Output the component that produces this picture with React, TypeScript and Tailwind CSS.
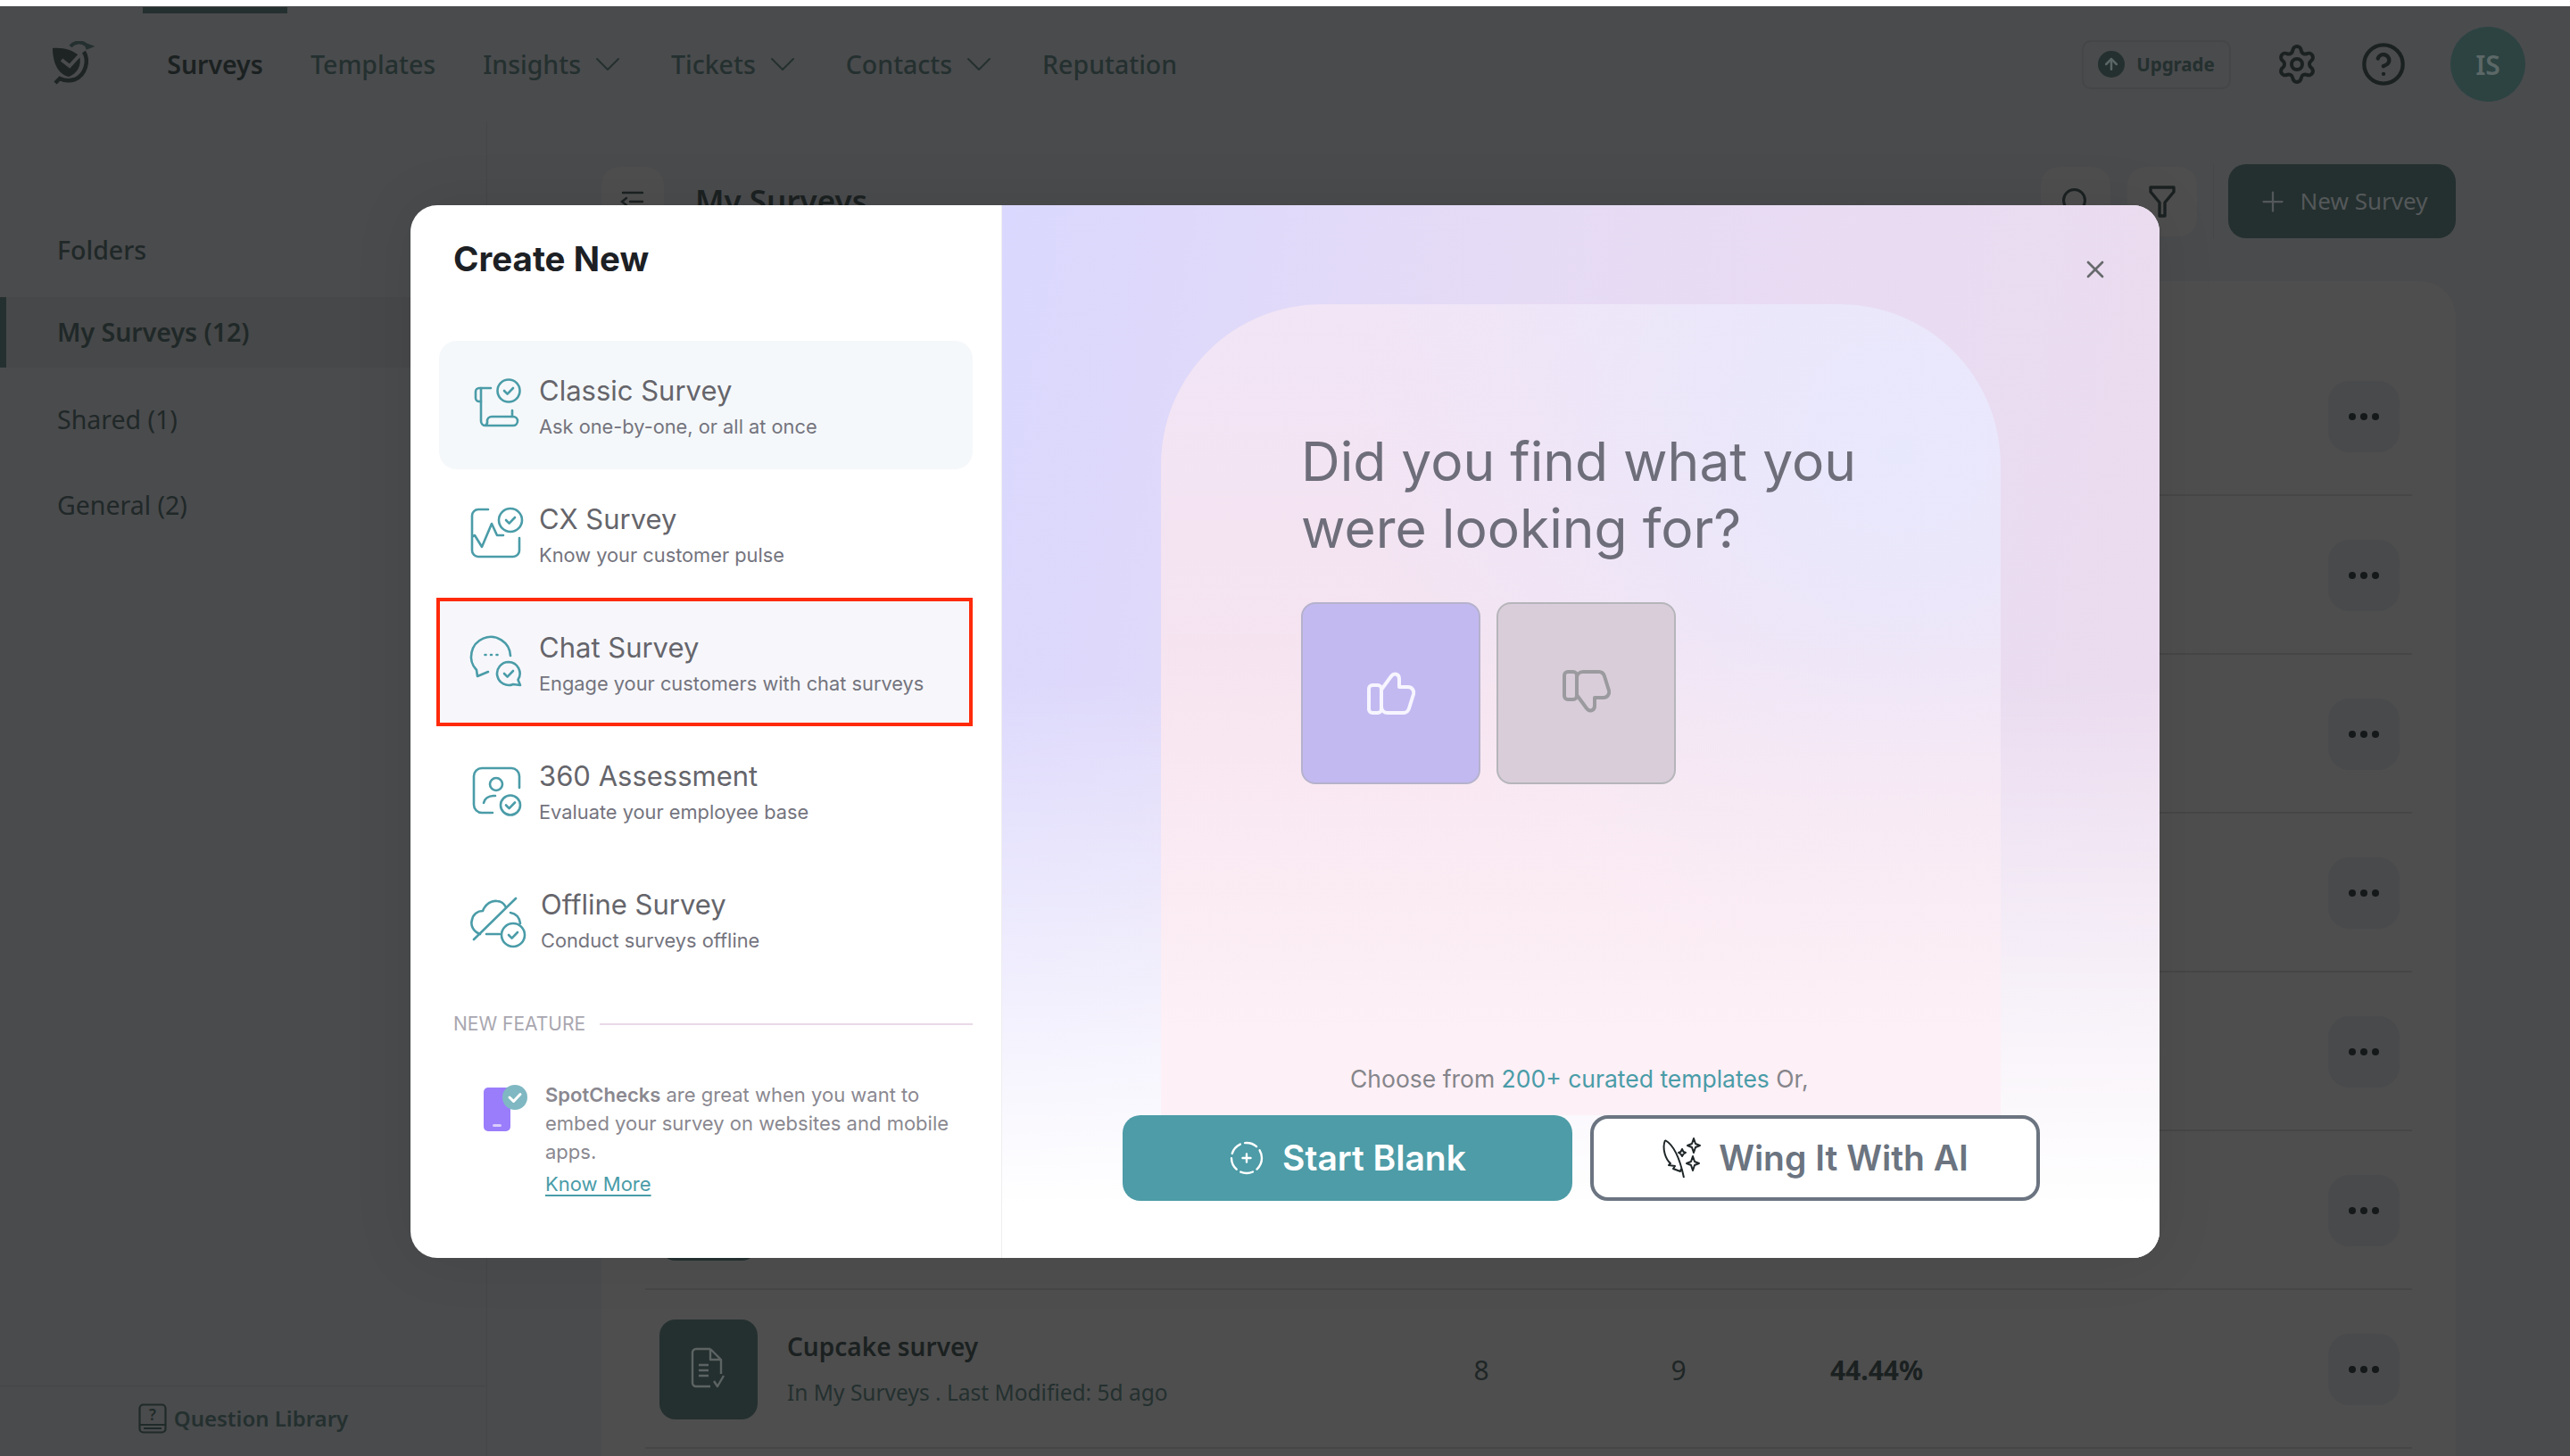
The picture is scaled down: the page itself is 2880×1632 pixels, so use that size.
import { ArrowUp, ChevronDown, CircleHelp, Plus, Search, Settings, X } from "lucide-react";

const TEAL = "#4a9ca8";

function CheckCircle({ cx, cy, r }: { cx: number; cy: number; r: number }) {
  return (
    <>
      <circle cx={cx} cy={cy} r={r} />
      <path d={`M${cx - 5} ${cy} l3.6 3.6 l6.4 -6.6`} />
    </>
  );
}

function IconFrame({ children }: { children: React.ReactNode }) {
  return (
    <svg
      viewBox="0 0 80 80"
      fill="none"
      stroke={TEAL}
      strokeWidth="2.6"
      strokeLinecap="round"
      strokeLinejoin="round"
      className="h-[80px] w-[80px] shrink-0"
    >
      {children}
    </svg>
  );
}

function ClassicIcon() {
  return (
    <IconFrame>
      <CheckCircle cx={50} cy={24} r={12.5} />
      <path d="M30 21 H17 a4 4 0 0 0 -4 4 v7 a4 4 0 0 0 4 4 h2" />
      <path d="M19 21 V58 a5 5 0 0 0 5 5 H55 a5 5 0 0 0 5 -5 a5 5 0 0 0 -5 -5 H31 a5 5 0 0 0 -5 5 a5 5 0 0 1 -2 5" />
      <path d="M54 53 V46" />
    </IconFrame>
  );
}

function CxIcon() {
  return (
    <IconFrame>
      <path d="M27 13 H16 a7 7 0 0 0 -7 7 V59 a7 7 0 0 0 7 7 H55 a7 7 0 0 0 7 -7 V45" />
      <path d="M10 43 L12 42 L20 55 L31 29 L37 42 H44" />
      <CheckCircle cx={52} cy={25} r={13} />
    </IconFrame>
  );
}

function ChatIcon() {
  return (
    <IconFrame>
      <path d="M52 33 A22 22 0 1 0 14 49 L15 56 L27 51" />
      <path d="M23.500 32 h1 M30 32 h1 M36.500 32 h1" />
      <path d="M50 40 A13 13 0 1 0 55 65 L63 66 L60.500 60 A13 13 0 0 0 50 40 Z" />
      <path d="M45 53 l3.600 3.600 l6.400 -6.600" />
    </IconFrame>
  );
}

function AssessmentIcon() {
  return (
    <IconFrame>
      <path d="M62 37 V24 a9 9 0 0 0 -9 -9 H20 a9 9 0 0 0 -9 9 V56 a9 9 0 0 0 9 9 H32" />
      <circle cx={36} cy={33} r={7} />
      <path d="M22 54 a11 9 0 0 1 11 -8 H35" />
      <CheckCircle cx={52} cy={56.500} r={11} />
    </IconFrame>
  );
}

function OfflineIcon() {
  return (
    <IconFrame>
      <path d="M11 63 L58 17" />
      <path d="M18 57 C10 54 7 47 9 41 C10 35 15 31 21 31 C24 23 31 19 37 20 C42 20 45 23 47 27" />
      <path d="M25 57 H40" />
      <path d="M52 33 C58 34 62 38 63 45" />
      <CheckCircle cx={55} cy={58} r={13} />
    </IconFrame>
  );
}

function Logo() {
  return (
    <svg viewBox="0 0 50 52" className="h-[52px] w-[50px]" fill="none">
      <path d="M0 8 C11 7 23 10 30 17 C33 27 27 37 18 40 C8 38 0 27 0 8 Z" fill="#1d2423" />
      <path d="M10 21 L19 28 L31 15" stroke="#4a4b4d" strokeWidth="4" />
      <path d="M20 6 C24 1 32 0 37 4 L42 6 L37 8" stroke="#24302f" strokeWidth="4" />
      <path d="M35 12 C41 22 37 38 25 43 C19 45 12 44 8 42 L3 47" stroke="#1d2423" strokeWidth="4.500" />
    </svg>
  );
}

function ThumbIcon({ color, flip }: { color: string; flip?: boolean }) {
  return (
    <svg
      viewBox="0 0 54 48"
      fill="none"
      stroke={color}
      strokeWidth="4"
      strokeLinejoin="round"
      className={flip ? "h-[48px] w-[54px] -scale-y-100" : "h-[48px] w-[54px]"}
    >
      <rect x="2" y="15" width="14" height="31" rx="4" />
      <path d="M16 20 L27 5 C30 1 36 2 36 8 V17 H46 C50 17 53 21 52 25 L47 41 C46 44 44 46 41 46 H23 C19 46 16 43 16 39" />
    </svg>
  );
}

function StartIcon() {
  return (
    <svg viewBox="0 0 40 40" fill="none" stroke="white" strokeWidth="2.400" strokeLinecap="round" className="h-[40px] w-[40px]">
      <circle cx="20" cy="20" r="17" strokeDasharray="14 5.400" />
      <path d="M20 15.500 V24.500 M15.500 20 H24.500" />
    </svg>
  );
}

function WingIcon() {
  return (
    <svg viewBox="0 0 44 48" fill="none" stroke="#1f2628" strokeWidth="2" strokeLinejoin="round" className="h-[48px] w-[44px]">
      <path d="M4 4 C13 9 20 22 25 46 M4 4 C0 14 5 26 10 30 L8 32 L15 33 L13 36 L21 39 L22 36" />
      <path d="M36 2 L38 8 L43 10 L38 12 L36 18 L34 12 L29 10 L34 8 Z" />
      <path d="M23 14 L24.500 17 L27 18 L24.500 19.500 L23 22 L21.500 19.500 L19 18 L21.500 17 Z" />
      <path d="M35 22 L37 28 L42 30 L37 32 L35 38 L33 32 L28 30 L33 28 Z" />
    </svg>
  );
}

function PhoneIcon() {
  return (
    <svg viewBox="0 0 52 52" className="h-[52px] w-[52px]" fill="none">
      <rect x="0" y="3" width="30" height="49" rx="5" fill="#9a7dfb" />
      <rect x="10" y="44" width="10" height="3" rx="1.500" fill="#d9ccfb" />
      <circle cx="35" cy="14" r="14" fill="#7fb8c2" />
      <path d="M29 14 L33.500 18.500 L41 10.500" stroke="white" strokeWidth="3" strokeLinecap="round" strokeLinejoin="round" />
    </svg>
  );
}

function QuestionBookIcon() {
  return (
    <svg viewBox="0 0 32 34" fill="none" stroke="#1f2a29" strokeWidth="2.200" className="h-[34px] w-[32px]">
      <rect x="1.500" y="1.500" width="29" height="31" rx="4" />
      <path d="M1.500 24 H30.500 M6 28 H26" />
      <text x="16" y="19" fontSize="17" textAnchor="middle" fill="#1f2a29" stroke="none" fontFamily="Noto Sans">?</text>
    </svg>
  );
}

function DocIcon() {
  return (
    <svg viewBox="0 0 40 50" fill="none" stroke="#5d6363" strokeWidth="2.400" strokeLinejoin="round" className="h-[50px] w-[40px]">
      <path d="M22 2 H6 a4 4 0 0 0 -4 4 V40 a4 4 0 0 0 4 4 H22 M22 2 L34 14 V30 M22 2 V14 H34" />
      <path d="M9 20 H20 M9 26 H20 M9 32 H20 M26 38 L30 44 L37 32" />
    </svg>
  );
}

const navItems = [
  { label: "Templates" },
  { label: "Insights", menu: true },
  { label: "Tickets", menu: true },
  { label: "Contacts", menu: true },
  { label: "Reputation" },
];

const surveyTypes = [
  { title: "Classic Survey", sub: "Ask one-by-one, or all at once", icon: <ClassicIcon />, box: "pl-[28px] bg-[#f5f8fa] rounded-[20px]", gap: "ml-[4px]" },
  { title: "CX Survey", sub: "Know your customer pulse", icon: <CxIcon />, box: "pl-[28px]", gap: "ml-[4px]" },
  { title: "Chat Survey", sub: "Engage your customers with chat surveys", icon: <ChatIcon />, box: "-ml-[3px] pl-[27px] bg-[#f7f7fb] border-[4px] border-[#ff2a0a]", gap: "ml-[4px]" },
  { title: "360 Assessment", sub: "Evaluate your employee base", icon: <AssessmentIcon />, box: "pl-[28px]", gap: "ml-[4px]" },
  { title: "Offline Survey", sub: "Conduct surveys offline", icon: <OfflineIcon />, box: "pl-[28px]", gap: "ml-[6px]" },
];

const rows = [null, null, null, null, null, null, { name: "Cupcake survey", meta: "In My Surveys . Last Modified: 5d ago", a: "8", b: "9", rate: "44.44%" }];

export default function App() {
  return (
    <div className="h-[1632px] w-[2880px] overflow-hidden bg-white pt-[7px] font-['Noto_Sans',sans-serif]">
      <div className="relative flex h-[1625px] flex-col bg-[#4a4b4d]">
        <header className="flex h-[130px] shrink-0 items-center pl-[59px] pr-[50px]">
          <Logo />
          <nav className="ml-[78px] flex items-center gap-[53px] text-[28.5px] font-medium text-[#24302f]">
            <a className="relative flex h-[130px] w-[108px] items-center justify-center whitespace-nowrap font-semibold text-[#1b2121]">
              <span className="absolute left-[-27px] top-[1px] h-[7px] w-[162px] bg-[#24302f]" />
              Surveys
            </a>
            {navItems.map((item) => (
              <a key={item.label} className="flex items-center gap-[6px] whitespace-nowrap">
                {item.label}
                {item.menu && <ChevronDown size={48} strokeWidth={1} className="-mr-[6px]" />}
              </a>
            ))}
          </nav>
          <div className="ml-auto flex items-center">
            <button className="flex h-[55px] w-[167px] items-center justify-center gap-[13px] rounded-[10px] border-[2px] border-[#454648] text-[20.5px] font-bold text-[#24302f]">
              <span className="flex h-[30px] w-[30px] items-center justify-center rounded-full bg-[#24302f]">
                <ArrowUp size={20} strokeWidth={3} className="text-[#5a6665]" />
              </span>
              Upgrade
            </button>
            <Settings size={48} strokeWidth={2} className="ml-[50px] text-[#1b2121]" />
            <CircleHelp size={52} strokeWidth={2} className="ml-[47px] text-[#1b2121]" />
            <div className="ml-[49px] flex h-[84px] w-[84px] items-center justify-center rounded-full bg-[#2c4342] text-[30px] font-semibold text-[#5c6867]">IS</div>
          </div>
        </header>

        <div className="flex min-h-0 flex-1">
          <aside className="flex w-[546px] shrink-0 flex-col border-r-[1px] border-[#444547] text-[28.5px] text-[#202828]">
            <div className="ml-[64px] mt-[123px] h-[40px] font-medium leading-[40px]">Folders</div>
            <div className="mt-[33px] flex h-[79px] items-center border-l-[7px] border-[#24302f] bg-[#474849] pl-[57px] font-semibold">My Surveys (12)</div>
            <div className="ml-[64px] mt-[38px] h-[40px] leading-[40px]">Shared (1)</div>
            <div className="ml-[64px] mt-[56px] h-[40px] leading-[40px]">General (2)</div>
            <div className="mt-auto flex h-[79px] items-center justify-center gap-[8px] border-t-[1px] border-[#444547] pb-[6px] text-[24px] font-semibold text-[#24302f]">
              <QuestionBookIcon />
              Question Library
            </div>
          </aside>

          <main className="flex min-w-0 flex-1 flex-col pl-[128px] pr-[128px] pt-[47px]">
            <div className="flex h-[83px] shrink-0 items-center">
              <div className="flex h-[78px] w-[70px] items-center justify-center rounded-[20px] bg-[#4e4e4e]">
                <svg viewBox="0 0 28 26" fill="none" stroke="#1b2121" strokeWidth="2.400" strokeLinecap="round" className="h-[26px] w-[28px]">
                  <path d="M3 3 H25 M11 13 H25 M3 23 H25 M7 9 L2 13 L7 17" />
                </svg>
              </div>
              <h1 className="ml-[35px] text-[35px] font-semibold text-[#1b2121]">My Surveys</h1>
              <div className="ml-auto flex items-center">
                <div className="flex h-[78px] w-[78px] items-center justify-center rounded-[20px] bg-[#4e4e4e]">
                  <Search size={36} strokeWidth={2} className="text-[#1b2121]" />
                </div>
                <div className="ml-[19px] flex h-[78px] w-[78px] items-center justify-center rounded-[20px] bg-[#4e4e4e]">
                  <svg viewBox="0 0 30 36" fill="none" stroke="#1b2121" strokeWidth="3.400" strokeLinejoin="round" className="h-[36px] w-[30px]">
                    <path d="M2 2 H28 V7 L18 19 V34 H12 V19 L2 7 Z" />
                  </svg>
                </div>
                <span className="ml-[18px] h-[83px] w-[1px] bg-[#454648]" />
                <button className="ml-[16px] flex h-[83px] w-[255px] items-center justify-center gap-[13px] rounded-[20px] bg-[#24302f] text-[26px] text-[#54585a]">
                  <Plus size={36} strokeWidth={1.500} />
                  New Survey
                </button>
              </div>
            </div>

            <section className="mt-[48px] min-h-0 flex-1 overflow-hidden rounded-t-[40px] bg-[#4e4e4e] px-[49px] pt-[63px]">
              {rows.map((row, i) => (
                <div key={i} className="flex h-[178px] items-center border-b-[2px] border-[#464646] pl-[16px] pr-[14px] pt-[2px]">
                  <div className="flex h-[112px] w-[110px] shrink-0 items-center justify-center rounded-[18px] bg-[#24302f]">
                    <DocIcon />
                  </div>
                  {row && (
                    <>
                      <div className="ml-[33px] w-[748px] shrink-0">
                        <div className="-mt-[3px] text-[28px] font-semibold leading-[40px] text-[#1b2121]">{row.name}</div>
                        <div className="mt-[14px] text-[24.5px] leading-[36px] text-[#24302f]">{row.meta}</div>
                      </div>
                      <div className="w-[60px] text-center text-[30px] text-[#1f2626]">{row.a}</div>
                      <div className="ml-[161px] w-[60px] text-center text-[30px] text-[#1f2626]">{row.b}</div>
                      <div className="ml-[132px] w-[120px] text-center text-[30px] font-bold text-[#1b2121]">{row.rate}</div>
                    </>
                  )}
                  <div className="ml-auto flex h-[80px] w-[80px] items-center justify-center gap-[5px] rounded-[24px] bg-[#494a4c]">
                    <span className="h-[8px] w-[8px] rounded-full bg-[#15191a]" />
                    <span className="h-[8px] w-[8px] rounded-full bg-[#15191a]" />
                    <span className="h-[8px] w-[8px] rounded-full bg-[#15191a]" />
                  </div>
                </div>
              ))}
            </section>
          </main>
        </div>

        {/* modal, lies over the dimmed page */}
        <div className="absolute left-[460px] top-[223px] flex h-[1180px] w-[1960px] overflow-hidden rounded-[30px] bg-white font-['Inter',sans-serif] shadow-[0_0_70px_rgba(0,0,0,0.08)]">
          <div className="flex w-[663px] shrink-0 flex-col border-r-[1px] border-[#eeeeee]">
            <h2 className="ml-[48px] mt-[37px] text-[38.5px] font-bold leading-[46px] text-[#1c2024]">Create New</h2>
            <ul className="ml-[32px] mr-[32px] mt-[69px]">
              {surveyTypes.map((item) => (
                <li key={item.title} className={`flex h-[144px] items-center ${item.box}`}>
                  {item.icon}
                  <div className={`${item.gap} pt-[2px]`}>
                    <div className="text-[31px] leading-[40px] text-[#65656b]">{item.title}</div>
                    <div className="mt-[5px] text-[21.8px] leading-[30px] text-[#74747e]">{item.sub}</div>
                  </div>
                </li>
              ))}
            </ul>
            <div className="ml-[48px] mr-[32px] mt-[31px] flex items-center gap-[16px]">
              <span className="text-[21px] leading-[30px] text-[#a9a7b0]">NEW FEATURE</span>
              <span className="h-[2px] flex-1 bg-[#ead9e8]" />
            </div>
            <div className="ml-[82px] mt-[48px] flex">
              <div className="mt-[5px] h-[52px]"><PhoneIcon /></div>
              <div className="ml-[17px] w-[490px] text-[22px] leading-[32px] text-[#8a8890]">
                <p><b className="font-semibold">SpotChecks</b> are great when you want to embed your survey on websites and mobile apps.</p>
                <a className="mt-[4px] block text-[#4a9ca8] underline underline-offset-[4px]">Know More</a>
              </div>
            </div>
          </div>

          <div className="relative flex min-w-0 flex-1 flex-col bg-[linear-gradient(to_bottom,rgba(255,255,255,0)_45%,#ffffff_95%),linear-gradient(100deg,#dad8fe_0%,#e6dbf5_40%,#ecdcee_100%)] pt-[111px]">
            <button className="absolute right-[56px] top-[56px] text-[#666a6c]">
              <X size={32} strokeWidth={2} />
            </button>
            <div className="mx-auto flex w-[941px] flex-1 flex-col rounded-t-[180px] bg-[linear-gradient(to_bottom,rgba(253,240,246,0)_40%,#fdf0f6_90%),radial-gradient(circle_at_88%_18%,#e8e8fd_0%,rgba(232,232,253,0)_55%),linear-gradient(to_bottom,#f1e5f6_0%,#f6e3ef_50%,#f7e4f0_100%)] pl-[157px]">
              <p className="mt-[139px] text-[60.5px] leading-[75px] text-[#6e6e7a]">
                Did you find what you
                <br />
                were looking for?
              </p>
              <div className="mt-[45px] flex gap-[18px]">
                <button className="flex h-[204px] w-[201px] items-center justify-center rounded-[16px] border-[2px] border-[#b5b2cc] bg-[#c3b9f1]">
                  <ThumbIcon color="#f7f5ff" />
                </button>
                <button className="flex h-[204px] w-[201px] items-center justify-center rounded-[16px] border-[2px] border-[#b5b5ba] bg-[#d9cdda] pb-[4px]">
                  <ThumbIcon color="#9b9b9f" flip />
                </button>
              </div>
              <p className="mb-[23px] ml-[55px] mt-auto text-[26.5px] leading-[36px] text-[#85858b]">
                Choose from <span className="text-[#4a9ca8]">200+ curated templates</span> Or,
              </p>
            </div>
            <div className="flex gap-[20px] pb-[64px] pl-[135px]">
              <button className="flex h-[96px] w-[504px] items-center justify-center gap-[20px] rounded-[20px] bg-[#4d9ca7] text-[39px] font-semibold text-white">
                <StartIcon />
                Start Blank
              </button>
              <button className="flex h-[96px] w-[504px] items-center justify-center gap-[20px] rounded-[20px] border-[4px] border-[#6b7480] bg-white text-[39px] font-semibold text-[#6b7480]">
                <WingIcon />
                Wing It With AI
              </button>
            </div>
          </div>
        </div>
      </div>
    </div>
  );
}
